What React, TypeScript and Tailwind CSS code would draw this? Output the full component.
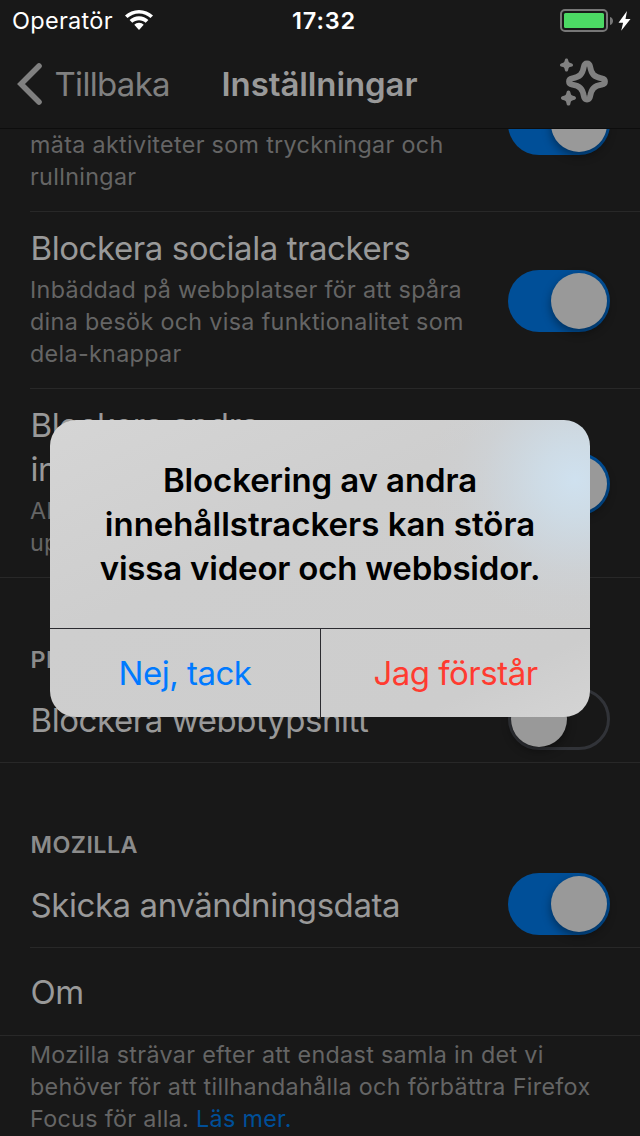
import type { ReactNode } from "react";

function Toggle({ on = true, className = "" }: { on?: boolean; className?: string }) {
  return (
    <div
      className={`flex h-[62px] w-[102px] shrink-0 items-center rounded-full ${
        on ? "justify-end bg-[#004f98] px-[3px]" : "justify-start border-[3px] border-[#313338]"
      } ${className}`}
    >
      <div className="size-14 rounded-full bg-[#999999] shadow-[0_4px_10px_rgba(0,0,0,0.4)]" />
    </div>
  );
}

function Title({ children }: { children: ReactNode }) {
  return <div className="pl-[0.5px] text-[33px] leading-[44px] tracking-[-0.43px] text-[#999999]">{children}</div>;
}

function Detail({ children, className = "" }: { children: ReactNode; className?: string }) {
  return (
    <div className={`text-[23.3px] leading-8 tracking-[0.33px] text-[#656565] ${className}`}>{children}</div>
  );
}

function SectionHeader({ children }: { children: ReactNode }) {
  return (
    <h2 className="pl-[30.5px] text-[23.3px] font-semibold leading-8 tracking-[0.45px] text-[#8b8b8b]">{children}</h2>
  );
}

function StatusBar() {
  return (
    <div className="flex h-10 items-center text-white">
      <div className="flex w-[240px] items-center gap-[12px] pl-3 pt-px">
        <span className="text-[23.5px] leading-8 tracking-[0.3px]">Operatör</span>
        <svg width="28" height="20" viewBox="0 0 28 20" fill="currentColor" className="-mt-0.5">
          <path d="M14 0C8.6 0 3.7 2.1 0 5.5L2.5 8.1C5.5 5.2 9.6 3.5 14 3.5s8.5 1.700 11.500 4.600L28 5.500C24.300 2.100 19.400 0 14 0Z" />
          <path d="M14 6.300c-3.600 0-6.900 1.400-9.400 3.800l2.700 2.700c1.700-1.600 4.100-2.600 6.700-2.600s5 1 6.700 2.600l2.700-2.700C20.900 7.700 17.600 6.300 14 6.300Z" />
          <path d="M14 12.800c-1.900 0-3.500.8-4.700 2L14 20l4.700-5.200c-1.200-1.200-2.800-2-4.700-2Z" />
        </svg>
      </div>
      <div className="w-[168px] pt-px text-center text-[23.5px] font-semibold leading-8 tracking-[0.8px]">17:32</div>
      <svg width="72" height="24" viewBox="0 0 72 24" className="ml-[152px] mt-px">
        <rect x="1" y="1" width="46" height="21" rx="4" fill="none" stroke="#777777" strokeWidth="2" />
        <rect x="4" y="4" width="40" height="15" rx="1.500" fill="#4cd964" />
        <path d="M50 8c4 1 4 7 0 8Z" fill="#777777" />
        <path d="M67 2 58.500 13.800h4.600L61.200 21.800 70.500 10h-5Z" fill="white" />
      </svg>
    </div>
  );
}

function NavBar() {
  return (
    <header className="flex h-[89px] items-center border-b border-[#0d0d0d]">
      <div className="flex w-[220px] items-center pl-[17px] text-[#808080]">
        <svg width="26" height="42" viewBox="0 0 26 42" fill="none" stroke="currentColor" strokeWidth="5.600" strokeLinecap="round">
          <path d="M22 3 4 21 22 39" />
        </svg>
        <span className="ml-[11.5px] whitespace-nowrap text-[33px] leading-[44px] tracking-[-0.7px]">Tillbaka</span>
      </div>
      <h1 className="w-[199px] whitespace-nowrap text-center text-[33px] font-semibold leading-[44px] tracking-[-0.1px] text-[#999999]">
        Inställningar
      </h1>
      <svg width="49" height="48" viewBox="0 0 49 48" className="-mt-1 ml-[141px]" fill="#808080">
        <path
          d="M27 5.500c1.900 0 2.800 1.400 3.200 3.400C31.400 16.300 34.200 19.100 41.600 20.300c2 .4 3.400 1.300 3.400 3.200s-1.400 2.800-3.400 3.200C34.200 27.900 31.400 30.700 30.200 38.100c-.4 2-1.300 3.400-3.200 3.400s-2.800-1.400-3.200-3.400C22.600 30.700 19.800 27.900 12.400 26.700 10.400 26.300 9 25.400 9 23.500s1.400-2.800 3.400-3.200C19.800 19.100 22.600 16.300 23.800 8.900 24.200 6.900 25.100 5.500 27 5.500Z"
          fill="none"
          stroke="#808080"
          strokeWidth="5.800"
        />
        <path transform="translate(0 .5)" d="M6.500 0c1.100 0 1.500.6 1.700 1.800.5 2.100.8 2.500 2.900 2.900 1.300.3 1.900.8 1.900 1.800s-.6 1.500-1.900 1.800c-2.100.4-2.400.8-2.900 2.900C8 12.400 7.600 13 6.500 13s-1.500-.6-1.700-1.800c-.5-2.100-.8-2.500-2.900-2.900C.6 8 0 7.500 0 6.500S.6 5 1.900 4.700C4 4.300 4.300 3.900 4.800 1.800 5 .6 5.400 0 6.500 0Z" />
        <path transform="translate(1 32.500) scale(1.150)" d="M6.500 0c1.100 0 1.500.6 1.700 1.800.5 2.100.8 2.500 2.900 2.900 1.300.3 1.900.8 1.900 1.800s-.6 1.500-1.900 1.800c-2.100.4-2.400.8-2.900 2.900C8 12.400 7.600 13 6.500 13s-1.500-.6-1.700-1.800c-.5-2.100-.8-2.500-2.900-2.900C.6 8 0 7.500 0 6.500S.6 5 1.900 4.700C4 4.300 4.300 3.900 4.800 1.800 5 .6 5.400 0 6.500 0Z" />
      </svg>
    </header>
  );
}

function Alert() {
  return (
    <div
      role="alertdialog"
      className="absolute left-[50px] top-[420px] flex h-[297px] w-[540px] flex-col overflow-hidden rounded-[26px] bg-[#cecece] bg-[radial-gradient(circle_at_525px_60px,rgba(207,225,239,1)_0px,rgba(206,222,234,0.85)_35px,rgba(205,219,230,0.6)_65px,rgba(205,217,227,0.3)_92px,rgba(205,215,224,0.1)_118px,rgba(205,214,222,0)_145px),linear-gradient(155deg,#d5d5d5_0%,#cecece_40%,#cdcdcd_85%,#d4d4d4_100%)]"
    >
      <div className="h-[208px] whitespace-nowrap pt-[38px] text-center text-[33px] font-semibold leading-[44px] text-black">
        <div className="tracking-[-0.1px]">Blockering av andra</div>
        <div className="tracking-[0px]">innehållstrackers kan störa</div>
        <div className="tracking-[-0.2px]">vissa videor och webbsidor.</div>
      </div>
      <div className="flex h-[89px] border-t border-[#2b2b30] text-[33px] leading-[44px]">
        <button className="w-[271px] border-r border-[#2b2b30] pb-px tracking-[-0.5px] text-[#007aff]">Nej, tack</button>
        <button className="w-[269px] pb-px tracking-[-0.5px] text-[#ff3b30]">Jag förstår</button>
      </div>
    </div>
  );
}

export default function App() {
  return (
    <div className="relative h-[1136px] w-[640px] overflow-hidden bg-[#181818] font-['Inter',sans-serif]">
      <StatusBar />
      <NavBar />
      <main className="h-[1007px] overflow-hidden whitespace-nowrap">
        <section className="border-b border-[#282828]">
          <div className="ml-[30px] flex h-[83px] justify-between border-b border-[#282828] pr-[30px]">
            <Detail>
              mäta aktiviteter som tryckningar och
              <br />
              rullningar
            </Detail>
            <Toggle className="-mt-9" />
          </div>
          <div className="ml-[30px] flex h-[177px] items-start justify-between border-b border-[#282828] pr-[30px] pt-[14px]">
            <div>
              <Title>Blockera sociala trackers</Title>
              <Detail className="mt-1">
                Inbäddad på webbplatser för att spåra
                <br />
                dina besök och visa funktionalitet som
                <br />
                dela-knappar
              </Detail>
            </div>
            <Toggle className="mt-11" />
          </div>
          <div className="ml-[30px] flex h-[188px] items-start justify-between pr-[30px] pt-[14px]">
            <div>
              <Title>
                Blockera andra
                <br />
                innehållstrackers
              </Title>
              <Detail className="mt-1">
                Aktivering kan orsaka att sidor
                <br />
                uppträder oväntat
              </Detail>
            </div>
            <Toggle className="mt-[50px]" />
          </div>
        </section>
        <section className="h-[185px] border-b border-[#282828] pt-[66px]">
          <SectionHeader>PRESTANDA</SectionHeader>
          <div className="mt-3 flex justify-between px-[30px]">
            <div className="pt-[10px]">
              <Title>Blockera webbtypsnitt</Title>
            </div>
            <Toggle on={false} />
          </div>
        </section>
        <section className="border-b border-[#282828] pt-[66px]">
          <SectionHeader>MOZILLA</SectionHeader>
          <div className="ml-[30px] flex h-[87px] items-start justify-between border-b border-[#282828] pr-[30px] pt-3">
            <div className="pt-[10px]">
              <Title>Skicka användningsdata</Title>
            </div>
            <Toggle />
          </div>
          <div className="flex h-[87px] items-center pl-[30px]">
            <Title>Om</Title>
          </div>
        </section>
        <footer className="pl-[30px] pt-[3px]">
          <Detail>
            Mozilla strävar efter att endast samla in det vi
            <br />
            behöver för att tillhandahålla och förbättra Firefox
            <br />
            Focus för alla. <a className="text-[#004f98]">Läs mer.</a>
          </Detail>
        </footer>
      </main>
      <Alert />
    </div>
  );
}
